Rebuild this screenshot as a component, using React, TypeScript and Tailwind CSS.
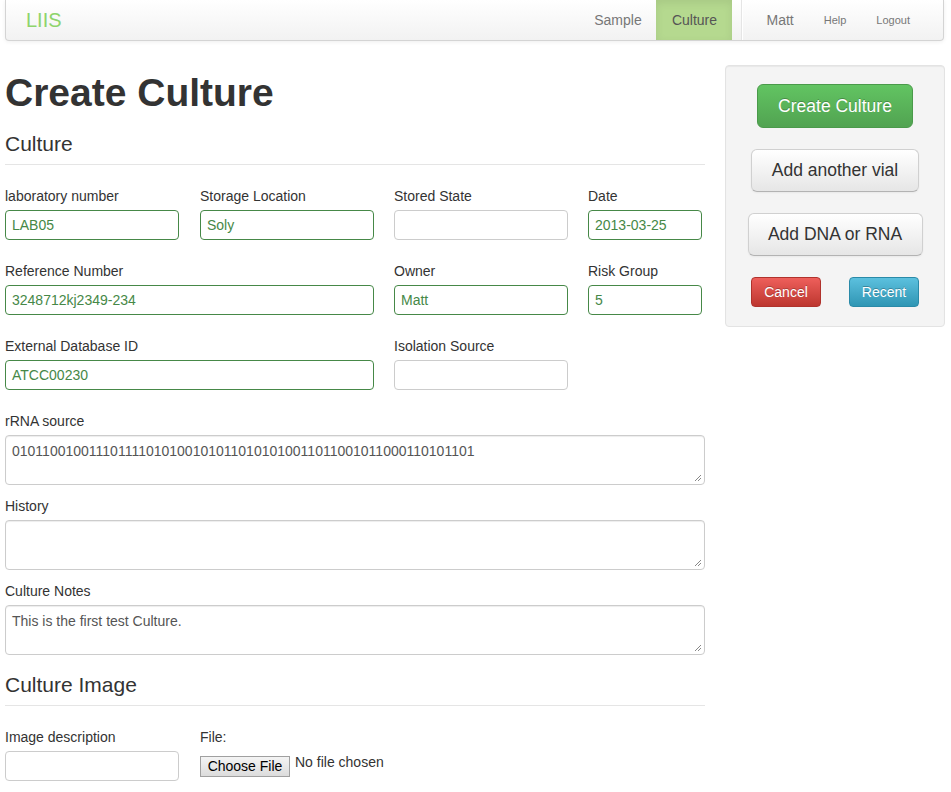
import React from "react";

const font = "font-['Liberation_Sans',Arial,sans-serif]";

function Field({
  label,
  value,
  width,
  colWidth,
  ok,
}: {
  label: string;
  value?: string;
  width: string;
  colWidth: string;
  ok?: boolean;
}) {
  return (
    <div className={colWidth}>
      <div className="h-5 leading-[22px] text-[14px] text-[#333] mb-[5px]">{label}</div>
      <div
        className={`${width} h-[30px] rounded-[4px] border px-[6px] text-[14px] leading-[29px] bg-white ${
          ok ? "border-[#468847] text-[#468847]" : "border-[#ccc] text-[#555]"
        }`}
      >
        {value}
      </div>
    </div>
  );
}

function Area({ label, value }: { label: string; value?: string }) {
  return (
    <div className="mb-[10px]">
      <div className="h-5 leading-[22px] text-[14px] text-[#333] mb-[5px]">{label}</div>
      <div className="relative w-[700px] h-[50px] rounded-[4px] border border-[#ccc] bg-white px-[6px] pt-[5px] text-[14px] leading-5 text-[#555] shadow-[inset_0_1px_1px_rgba(0,0,0,0.075)]">
        {value}
        <svg className="absolute right-[2px] bottom-[2px]" width="8" height="8" viewBox="0 0 8 8">
          <path d="M1 7 L7 1 M4 7 L7 4" stroke="#888" strokeWidth="1" />
        </svg>
      </div>
    </div>
  );
}

function Legend({ text }: { text: string }) {
  return (
    <div className="h-[41px] leading-10 text-[21px] text-[#333] border-b border-[#e5e5e5] mb-5">{text}</div>
  );
}

export default function App() {
  return (
    <div className={`${font} bg-white min-h-screen w-[951px] text-[#333]`}>
      <div className="mx-[5px] w-[939px] h-[41px] flex items-stretch border-x border-b border-[#d4d4d4] rounded-b-[4px] bg-gradient-to-b from-white to-[#f2f2f2] shadow-[0_1px_4px_rgba(0,0,0,0.065)]">
        <div className="pl-5 text-[20px] leading-10 text-[#8ed46c]">LIIS</div>
        <div className="flex-1" />
        <div className="flex items-stretch text-[14px] text-[#777]">
          <div className="leading-10 w-[77px] text-center">Sample</div>
          <div className="leading-10 w-[76px] text-center bg-[#b5d98f] text-[#555] shadow-[inset_0_3px_8px_rgba(0,0,0,0.08)]">Culture</div>
          <div className="w-[9px]" />
          <div className="w-[2px] border-l border-[#e5e5e5] bg-white" />
          <div className="leading-10 pl-[23px] pr-[15px]">Matt</div>
          <div className="leading-10 text-[11px] px-[15px]">Help</div>
          <div className="leading-10 text-[11px] pl-[15px] pr-[33px]">Logout</div>
        </div>
      </div>

      <div className="flex pl-[5px] pt-6 gap-5">
        <div className="w-[700px]">
          <h1 className="text-[39px] font-bold leading-10 mt-2 mb-[11px] text-[#333]">Create Culture</h1>
          <Legend text="Culture" />
          <div className="flex mb-5">
            <Field colWidth="w-[195px]" width="w-[174px]" label="laboratory number" value="LAB05" ok />
            <Field colWidth="w-[194px]" width="w-[174px]" label="Storage Location" value="Soly" ok />
            <Field colWidth="w-[194px]" width="w-[174px]" label="Stored State" />
            <Field colWidth="w-[114px]" width="w-[114px]" label="Date" value="2013-03-25" ok />
          </div>
          <div className="flex mb-5">
            <Field colWidth="w-[389px]" width="w-[369px]" label="Reference Number" value="3248712kj2349-234" ok />
            <Field colWidth="w-[194px]" width="w-[174px]" label="Owner" value="Matt" ok />
            <Field colWidth="w-[114px]" width="w-[114px]" label="Risk Group" value="5" ok />
          </div>
          <div className="flex mb-5">
            <Field colWidth="w-[389px]" width="w-[369px]" label="External Database ID" value="ATCC00230" ok />
            <Field colWidth="w-[194px]" width="w-[174px]" label="Isolation Source" />
          </div>
          <Area label="rRNA source" value="0101100100111011110101001010110101010011011001011000110101101" />
          <Area label="History" />
          <Area label="Culture Notes" value="This is the first test Culture." />
          <Legend text="Culture Image" />
          <div className="flex">
            <Field colWidth="w-[195px]" width="w-[174px]" label="Image description" />
            <div>
              <div className="h-5 leading-[22px] text-[14px] text-[#333] mb-[5px]">File:</div>
              <div className="flex items-start pt-[5px]">
                <div className="h-[21px] w-[90px] border border-[#a0a0a0] bg-gradient-to-b from-[#f4f4f4] to-[#dcdcdc] text-[14px] leading-[19px] text-center text-black">
                  Choose File
                </div>
                <div className="ml-[5px] -mt-[4px] text-[14px] leading-5 text-[#333]">No file chosen</div>
              </div>
            </div>
          </div>
        </div>

        <div className="w-[220px] self-start bg-[#f4f4f4] border border-[#e3e3e3] rounded-[4px] pt-[18px] pb-[19px] flex flex-col items-center shadow-[inset_0_1px_1px_rgba(0,0,0,0.05)]">
          <div className="h-[44px] w-[156px] rounded-[6px] border border-[#4a9a4a] bg-gradient-to-b from-[#62c462] to-[#51a351] text-white text-[17.5px] leading-[42px] text-center [text-shadow:0_-1px_0_rgba(0,0,0,0.25)]">
            Create Culture
          </div>
          <div className="mt-[21px] h-[43px] w-[168px] rounded-[6px] border border-[#d0d0d0] border-b-[#b3b3b3] bg-gradient-to-b from-white to-[#e6e6e6] text-[17.5px] leading-[41px] text-center text-[#333] shadow-[0_1px_2px_rgba(0,0,0,0.05)]">
            Add another vial
          </div>
          <div className="mt-[21px] h-[43px] w-[175px] rounded-[6px] border border-[#d0d0d0] border-b-[#b3b3b3] bg-gradient-to-b from-white to-[#e6e6e6] text-[17.5px] leading-[41px] text-center text-[#333] shadow-[0_1px_2px_rgba(0,0,0,0.05)]">
            Add DNA or RNA
          </div>
          <div className="mt-[21px] w-full flex justify-between px-[25px]">
            <div className="h-[30px] w-[70px] rounded-[4px] border border-[#b0322c] bg-gradient-to-b from-[#ee5f5b] to-[#bd362f] text-white text-[14px] leading-[28px] text-center [text-shadow:0_-1px_0_rgba(0,0,0,0.25)]">
              Cancel
            </div>
            <div className="h-[30px] w-[70px] rounded-[4px] border border-[#2a8aa8] bg-gradient-to-b from-[#5bc0de] to-[#2f96b4] text-white text-[14px] leading-[28px] text-center [text-shadow:0_-1px_0_rgba(0,0,0,0.25)]">
              Recent
            </div>
          </div>
        </div>
      </div>
    </div>
  );
}
